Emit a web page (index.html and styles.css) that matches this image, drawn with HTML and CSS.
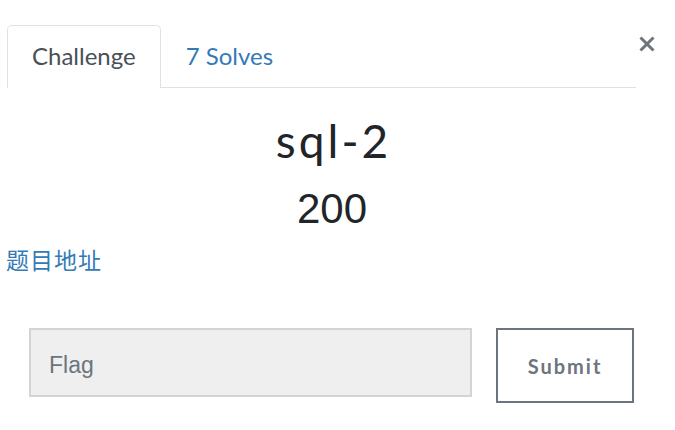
FILE: index.html
```html
<!DOCTYPE html>
<html>
<head>
<meta charset="utf-8">
<link rel="stylesheet" href="styles.css">
</head>
<body>
<div class="modal">
  <div class="top">
    <ul class="tabs">
      <li class="tab active">Challenge</li>
      <li class="tab link-tab">7 Solves</li>
    </ul>
    <button class="close" aria-label="Close">
      <svg width="18" height="18" viewBox="0 0 18 18"><path d="M2.5 2.5 L15.5 15.5 M15.5 2.5 L2.5 15.5" stroke="#6f757b" stroke-width="3" fill="none"/></svg>
    </button>
  </div>
  <h2 class="title">sql-2</h2>
  <h3 class="value">200</h3>
  <a class="url" href="#">题目地址</a>
  <form class="submit-row">
    <input class="flag" type="text" placeholder="Flag">
    <button class="submit" type="button">Submit</button>
  </form>
</div>
</body>
</html>
```
FILE: styles.css
```css
html, body {
  margin: 0;
  padding: 0;
  background: #ffffff;
}
.modal {
  width: 652px;
  padding: 25px 17px 0 6px;
  font-family: Lato, "Liberation Sans", sans-serif;
}
.top {
  display: flex;
  align-items: flex-start;
}
.tabs {
  list-style: none;
  margin: 0 0 0 1px;
  padding: 0;
  display: flex;
  width: 629px;
  border-bottom: 1px solid #dee2e6;
}
.tab {
  padding: 12px 24px 13px 24px;
  font-size: 24px;
  line-height: 36px;
  border: 1px solid transparent;
  border-bottom: none;
  color: #337ab7;
}
.tab.active {
  color: #495057;
  border-color: #dee2e6;
  border-radius: 5px 5px 0 0;
  background: #fff;
  margin-bottom: -1px;
  padding-bottom: 14px;
}
.close {
  border: none;
  background: none;
  padding: 0;
  margin: 10px 0 0 2px;
  width: 18px;
  height: 18px;
  display: block;
}
.close svg { display: block; }
.title {
  margin: 28px 0 0 3px;
  text-align: center;
  font-family: Lato, sans-serif;
  font-weight: 400;
  font-size: 46px;
  line-height: 50px;
  color: #212529;
  letter-spacing: 3px;
}
.value {
  margin: 20px 0 0 0;
  text-align: center;
  font-family: "Liberation Sans", Arial, sans-serif;
  font-weight: 400;
  font-size: 42px;
  line-height: 46px;
  color: #212529;
}
.url {
  display: block;
  margin-top: 14px;
  font-family: "Noto Sans CJK SC", sans-serif;
  font-size: 23px;
  line-height: 26px;
  color: #337ab7;
  text-decoration: none;
  letter-spacing: 1px;
}
.submit-row {
  display: flex;
  align-items: flex-start;
  gap: 24px;
  margin: 56px 0 0 23px;
}
.flag {
  box-sizing: border-box;
  width: 443px;
  height: 69px;
  border: 2px solid #d1d5da;
  background: #efefef;
  padding: 6px 18px 0 18px;
  font-family: "Liberation Sans", Arial, sans-serif;
  font-size: 23px;
  color: #495057;
  outline: none;
  margin: 0;
}
.flag::placeholder {
  color: #6c757d;
}
.submit {
  box-sizing: border-box;
  width: 138px;
  height: 75px;
  border: 2px solid #6c757d;
  background: #fff;
  font-family: Lato, sans-serif;
  font-weight: 700;
  font-size: 20px;
  letter-spacing: 2px;
  color: #6c757d;
  padding: 0;
  margin: 0;
}
```
